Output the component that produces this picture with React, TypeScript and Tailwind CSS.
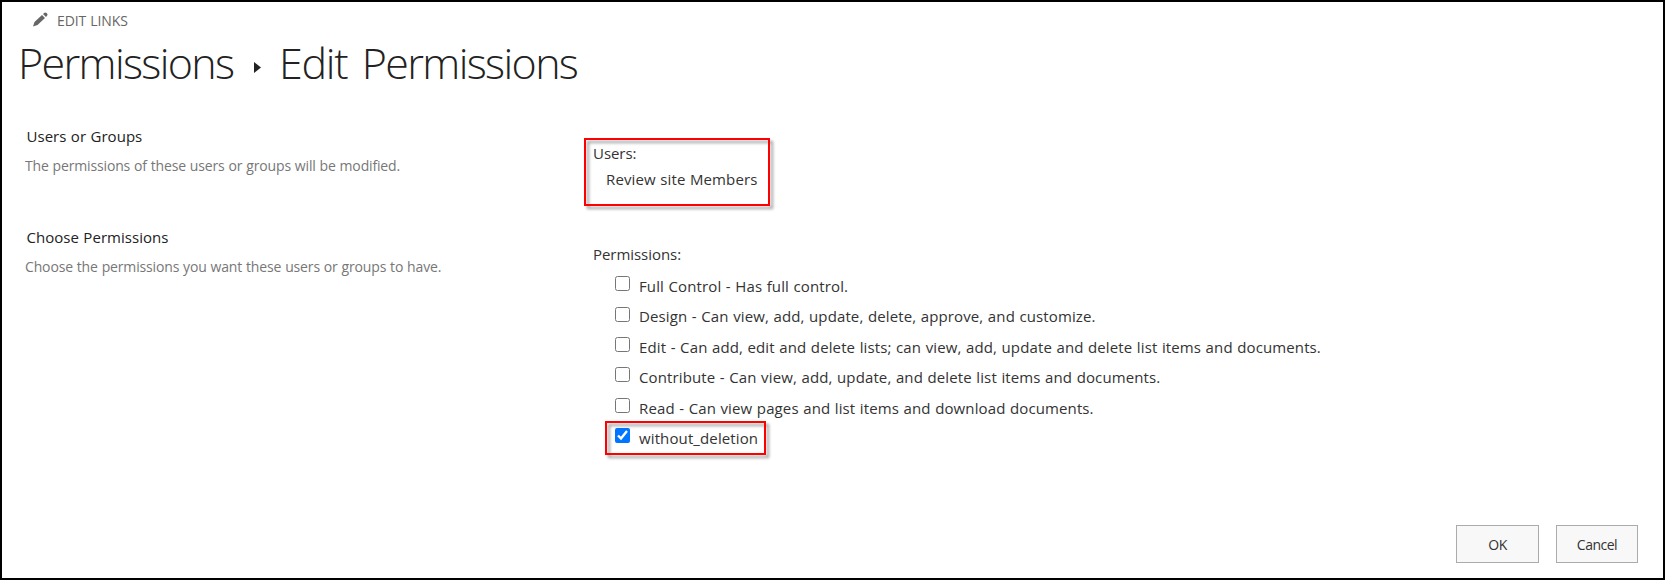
import { useState } from "react";

interface PermissionLevel {
  id: string;
  label: string;
  highlighted?: boolean;
}

const LEVELS: PermissionLevel[] = [
  { id: "full", label: "Full Control - Has full control." },
  { id: "design", label: "Design - Can view, add, update, delete, approve, and customize." },
  { id: "edit", label: "Edit - Can add, edit and delete lists; can view, add, update and delete list items and documents." },
  { id: "contribute", label: "Contribute - Can view, add, update, and delete list items and documents." },
  { id: "read", label: "Read - Can view pages and list items and download documents." },
  { id: "custom", label: "without_deletion", highlighted: true },
];

export default function App() {
  const [selected, setSelected] = useState<Set<string>>(new Set(["custom"]));

  function toggle(id: string) {
    setSelected((prev) => {
      const next = new Set(prev);
      if (next.has(id)) next.delete(id);
      else next.add(id);
      return next;
    });
  }

  return (
    <div className="flex h-[580px] w-[1665px] flex-col overflow-hidden whitespace-nowrap border-2 border-black bg-white font-['Open_Sans',sans-serif] text-[15px] tracking-[0.12px] text-[#333] [word-spacing:0.5px]">
      {/* Header */}
      <header className="h-[123px]">
        <div className="flex h-[35px] items-center gap-[9px] pl-[31px]">
          <PencilIcon />
          <span className="pt-0.5 text-[14px] tracking-[-0.1px] text-[#666]">EDIT LINKS</span>
        </div>
        <h1 className="flex h-[52px] items-center pl-4 text-[43px] font-light leading-[52px] tracking-[-1.65px] text-[#222] [word-spacing:5px]">
          <span className="w-[236px]">Permissions</span>
          <svg className="mr-[18px] mt-[9px] h-[11px] w-[7px]" viewBox="0 0 7 11" fill="#222">
            <path d="M0 0l7 5.5L0 11z" />
          </svg>
          <span>
            <span className="tracking-[-1.3px]">Edit</span> Permissions
          </span>
        </h1>
      </header>

      {/* Users or groups */}
      <section className="flex h-[101px]">
        <SectionIntro title="Users or Groups" description="The permissions of these users or groups will be modified." />
        <div className="relative pl-[9px] pt-[17px]">
          <Highlight className="left-0 top-[13px] h-[68px] w-[186px]" />
          <div className="h-[26px] leading-[22px] tracking-[-0.05px]">Users:</div>
          <div className="pl-[13px] leading-[22px]">Review site Members</div>
        </div>
      </section>

      {/* Permission levels */}
      <section className="flex h-[299px]">
        <SectionIntro title="Choose Permissions" description="Choose the permissions you want these users or groups to have." />
        <div className="pl-[9px] pt-[17px]">
          <div className="h-[26px] leading-[22px] tracking-[-0.05px]">Permissions:</div>
          <div className="pl-[22px]">
            {LEVELS.map((level) => (
              <label key={level.id} className="relative flex h-[30.4px] items-center">
                {level.highlighted && <Highlight className="-left-2.5 top-0 h-[34px] w-[161px]" />}
                <input
                  type="checkbox"
                  checked={selected.has(level.id)}
                  onChange={() => toggle(level.id)}
                  className="mb-px size-[15px] accent-[#0075ff]"
                />
                <span className="pl-[9px] pt-1">{level.label}</span>
              </label>
            ))}
          </div>
        </div>
      </section>

      {/* Actions */}
      <footer className="flex justify-end gap-[17px] pr-[25px] text-[14px] tracking-[-0.5px]">
        <button className="h-[38px] w-[83px] border border-[#ababab] bg-[#f8f8f8] pt-px">OK</button>
        <button className="h-[38px] w-[82px] border border-[#ababab] bg-[#f8f8f8] pt-px">Cancel</button>
      </footer>
    </div>
  );
}

function SectionIntro({ title, description }: { title: string; description: string }) {
  return (
    <div className="w-[582px] shrink-0 pl-[23px]">
      <h2 className="pl-[1.5px] leading-[22px] tracking-[0.03px] text-[#222]">{title}</h2>
      <p className="pt-2 text-[14px] leading-[22px] tracking-[-0.15px] text-[#777] [word-spacing:0.4px]">{description}</p>
    </div>
  );
}

function Highlight({ className }: { className: string }) {
  return (
    <span
      className={`pointer-events-none absolute border-2 border-[#fe0000] drop-shadow-[3px_3px_1.5px_rgba(0,0,0,0.4)] ${className}`}
    />
  );
}

function PencilIcon() {
  return (
    <svg className="size-[15px]" viewBox="0 0 15 15" fill="#666">
      <path d="M0 14.500l1.500-4.500L9 3l3 3-7.500 7zM10 2l1.500-1.300q1-.7 2 .2l.6.600q.9 1 .1 1.900L13 5z" />
    </svg>
  );
}
